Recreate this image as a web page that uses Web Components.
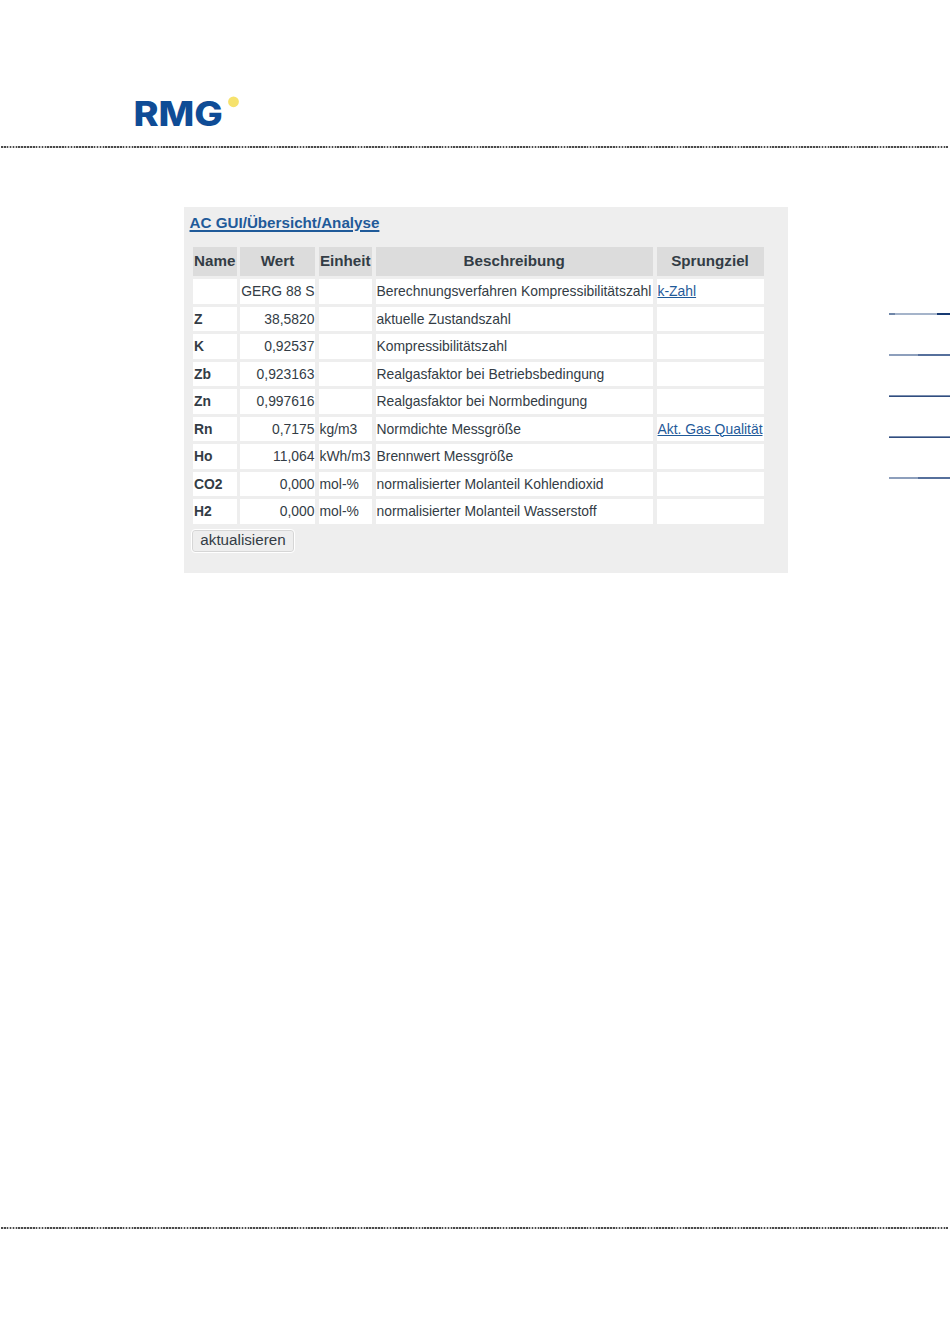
<!DOCTYPE html>
<html lang="de"><head><meta charset="utf-8"><title>AC GUI</title>
<style>html,body{margin:0;padding:0;background:#fff}</style></head>
<body><doc-page>
<rmg-logo slot="logo"></rmg-logo>
<ac-panel slot="main" heading="AC GUI/Übersicht/Analyse"></ac-panel>
<side-marks slot="side"></side-marks>
</doc-page>
<script>
const FONT='"Liberation Sans",Arial,sans-serif';
function def(name,html,setup){customElements.define(name,class extends HTMLElement{
  connectedCallback(){if(this.shadowRoot)return;const r=this.attachShadow({mode:'open'});r.innerHTML=html;setup&&setup.call(this,r);}
});}
def('doc-page',`<style>
:host{display:flex;flex-direction:column;width:950px;height:1344px;overflow:hidden;font-family:${FONT};color:#333c45}
.head{height:146px;box-sizing:border-box;padding:96px 0 0 135px}
.rule{height:2px;flex:none;margin:0 2px 0 1px;background:repeating-linear-gradient(90deg,#4a4a4a 0 1.6px,#c8c8c8 1.6px 2.9px)}
.body{flex:1;display:flex;padding-top:59px;min-height:0}
.main{padding-left:184px;width:604px;flex:none}
.side{margin-left:auto;padding-top:106.4px}
</style>
<div class="head"><slot name="logo"></slot></div>
<div class="rule"></div>
<div class="body"><div class="main"><slot name="main"></slot></div><div class="side"><slot name="side"></slot></div></div>
<div class="rule"></div>
<div style="height:115px;flex:none"></div>`);
def('rmg-logo',`<style>:host{display:block;width:106px;height:34px}svg{display:block;overflow:visible}</style>
<svg width="106" height="34" viewBox="0 0 106 34" role="img" aria-label="RMG">
<text x="-1.6" y="30.3" font-family="Inter" font-weight="800" font-size="33.5" fill="#0f4c96" textLength="89.5" lengthAdjust="spacingAndGlyphs">RMG</text>
<circle cx="98.5" cy="5.8" r="5.4" fill="#f6e26d"/></svg>`);
def('side-marks',`<style>:host{display:flex;flex-direction:column;gap:38.85px;width:61px}
i{display:block;height:2px;background:linear-gradient(90deg,#8d9fbc 0 48%,#56709c 48%)}
i.a{background:linear-gradient(90deg,#6f86a8 0 10%,#a5b4ca 10% 78%,#173a72 78%)}
i.d{background:linear-gradient(#9fb0c8,#0c2c66)}</style>
<i class="a"></i><i></i><i class="d"></i><i class="d"></i><i></i>`);
def('ac-button',`<style>:host{display:inline-block}
button{font:15.2px ${FONT};color:#333c45;background:#eee;border:1px solid #d6d6d6;border-radius:3px;height:22px;width:102px;padding:0 0 2px;outline:1px solid #fff;display:block;line-height:18px}</style>
<button><slot></slot></button>`);
const rows=[
['','GERG 88 S','','Berechnungsverfahren Kompressibilitätszahl','k-Zahl'],
['Z','38,5820','','aktuelle Zustandszahl',''],
['K','0,92537','','Kompressibilitätszahl',''],
['Zb','0,923163','','Realgasfaktor bei Betriebsbedingung',''],
['Zn','0,997616','','Realgasfaktor bei Normbedingung',''],
['Rn','0,7175','kg/m3','Normdichte Messgröße','Akt. Gas Qualität'],
['Ho','11,064','kWh/m3','Brennwert Messgröße',''],
['CO2','0,000','mol-%','normalisierter Molanteil Kohlendioxid',''],
['H2','0,000','mol-%','normalisierter Molanteil Wasserstoff','']];
def('ac-panel',`<style>
:host{display:block;width:604px;height:366px;box-sizing:border-box;background:#eee;padding:6px 0 0 5.5px;color:#333c45}
h1{margin:0;font:700 15.2px/20px ${FONT};height:34px}
a{color:#1f5a99;text-decoration:underline}
h1 a{text-decoration-thickness:2px;text-underline-offset:2px}
.t{display:grid;grid-template-columns:43.5px 75px 53.5px 277.5px 107px;column-gap:3.5px;grid-template-rows:29px repeat(9,24.5px);row-gap:3px;margin-left:3.5px;width:max-content}
.th{background:#dcdcdc;font:700 15.2px/28px ${FONT};text-align:center;white-space:nowrap;overflow:visible}
.c{background:#fff;font:13.9px/24px ${FONT};padding:0 1px;white-space:nowrap;box-sizing:border-box;min-width:0}
.n{font-weight:700}.r{text-align:right;padding-right:.5px}
ac-button{margin:6.5px 0 0 2.5px;display:block;width:max-content}
</style>
<h1><a href="#"></a></h1><div class="t"></div><ac-button>aktualisieren</ac-button>`,function(r){
 r.querySelector('h1 a').textContent=this.getAttribute('heading');
 const t=r.querySelector('.t');
 ['Name','Wert','Einheit','Beschreibung','Sprungziel'].forEach(h=>{const d=document.createElement('div');d.className='th';d.textContent=h;t.append(d)});
 rows.forEach(row=>row.forEach((v,i)=>{const d=document.createElement('div');d.className='c'+(i==0?' n':i==1?' r':'');
   if(i==4&&v){const a=document.createElement('a');a.href='#';a.textContent=v;d.append(a)}else d.textContent=v;t.append(d)}));
});
</script></body></html>
